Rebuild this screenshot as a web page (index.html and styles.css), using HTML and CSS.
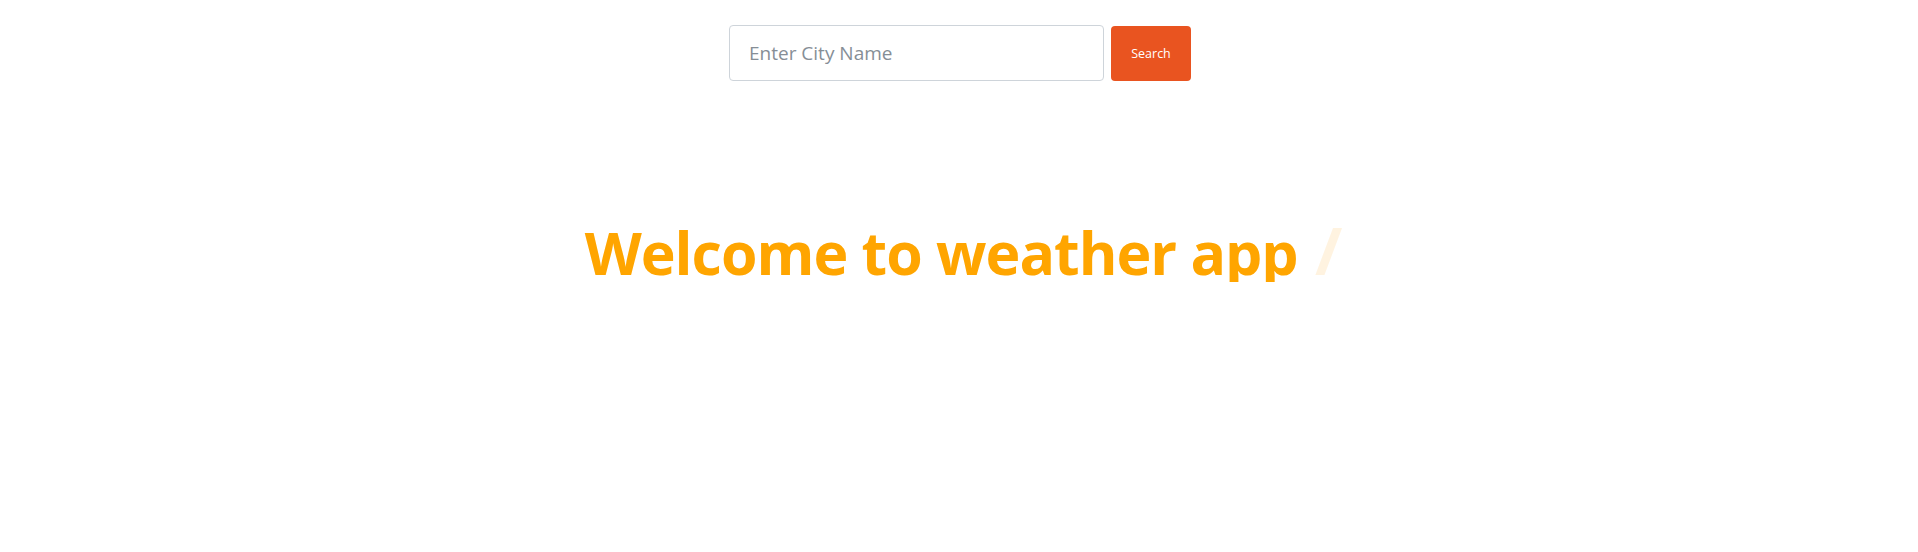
FILE: index.html
```html
<!DOCTYPE html>
<html lang="en">
<head>
<meta charset="utf-8">
<title>Weather App</title>
<link rel="stylesheet" href="styles.css">
</head>
<body>
<div class="page">
  <form class="search-form">
    <input class="city-input" type="text" placeholder="Enter City Name">
    <button class="search-btn" type="button">Search</button>
  </form>
  <h1 class="welcome">Welcome to weather app <span class="cursor">/</span></h1>
</div>
</body>
</html>
```
FILE: styles.css
```css
html, body {
  margin: 0;
  padding: 0;
  background: #ffffff;
}
.page {
  font-family: "Open Sans", "Noto Sans", sans-serif;
  display: flex;
  flex-direction: column;
  align-items: center;
}
.search-form {
  display: flex;
  gap: 7px;
  margin-top: 25px;
  padding-left: 2px;
}
.city-input {
  box-sizing: border-box;
  width: 375px;
  height: 56px;
  border: 1px solid #ced4da;
  border-radius: 4px;
  padding: 0 19px;
  font-family: "Open Sans", "Noto Sans", sans-serif;
  font-size: 19px;
  color: #495057;
  outline: none;
}
.city-input::placeholder {
  color: #868e96;
}
.search-btn {
  box-sizing: border-box;
  width: 80px;
  height: 55px;
  margin-top: 1px;
  border: none;
  border-radius: 4px;
  background: #e95420;
  color: #ffffff;
  font-family: "Open Sans", "Noto Sans", sans-serif;
  font-size: 12.5px;
  padding: 0;
}
.welcome {
  margin: 142px 0 0 0;
  padding-left: 8px;
  font-family: "Open Sans", "Noto Sans", sans-serif;
  font-weight: 700;
  font-size: 59px;
  line-height: 1;
  color: #ffa500;
  letter-spacing: -1px;
}
.cursor {
  color: #fff3e0;
  font-size: 1.12em;
  line-height: 0;
  margin-left: 3px;
}
```
